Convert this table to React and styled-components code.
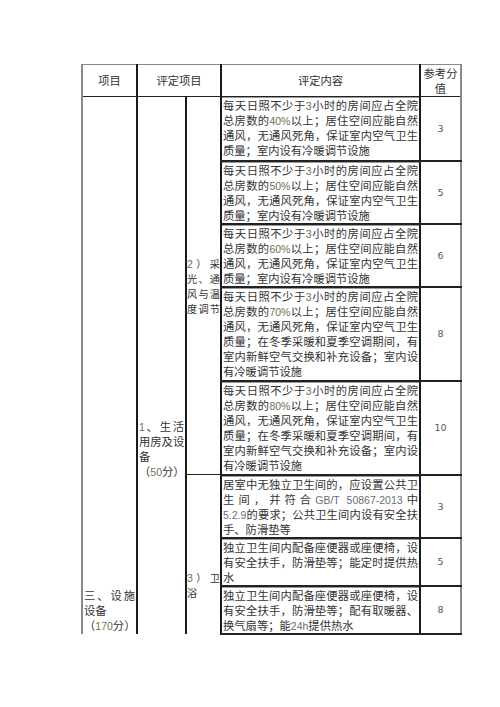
import React from 'react'
import styled, { createGlobalStyle } from 'styled-components'

const GlobalStyle = createGlobalStyle`
  html, body {
    margin: 0;
    padding: 0;
    background: #ffffff;
  }
  body {
    font-family: "Noto Sans CJK SC", "Noto Sans", sans-serif;
    color: #333333;
  }
`

const Page = styled.div`
  width: 500px;
  height: 707px;
  padding: 64px 0 0 81px;
  box-sizing: border-box;
  background: #ffffff;
`

const Table = styled.table`
  width: 379px;
  table-layout: fixed;
  border-collapse: collapse;
  border-top: 1px solid #8a8a8a;
  border-left: 2px solid #8a8a8a;
  border-right: 2px solid #8a8a8a;
  font-size: 11.3px;
  line-height: 15px;
  color: #333333;
`

const Row = styled.tr`
  height: ${p => p.$h}px;
`

const HeadCell = styled.th`
  font-weight: normal;
  text-align: center;
  vertical-align: middle;
  padding: 0;
  border-bottom: 1.5px solid #222;
  border-left: 2px solid #1a1a1a;
  &:first-child {
    border-left: none;
  }
`

const SideCell = styled.td`
  vertical-align: ${p => p.$align || 'top'};
  padding: ${p => p.$pad || '0'};
  border-left: ${p => (p.$first ? 'none' : '2px solid #1a1a1a')};
  border-bottom: ${p => (p.$line ? '1.5px solid #222' : 'none')};
  font-size: ${p => p.$size || 11.3}px;
`

const ContentCell = styled.td`
  vertical-align: top;
  padding: 1px 1px 0 1px;
  border-left: 2px solid #1a1a1a;
  border-bottom: 2px solid #222;
  box-shadow: inset 0 1px 0 #9a9a9a;
`

const ScoreCell = styled.td`
  vertical-align: middle;
  text-align: center;
  padding: 0;
  border-left: 2px solid #1a1a1a;
  border-bottom: 2px solid #222;
  font-family: "DejaVu Sans", Verdana, sans-serif;
  font-size: 9.5px;
  color: #555555;
`

const Line = styled.div`
  height: 15px;
  white-space: nowrap;
  text-align: ${p => p.$mode};
  text-align-last: ${p => p.$mode};
`

const Num = styled.span`
  font-family: "Liberation Sans", Arial, sans-serif;
  font-size: 10.5px;
  line-height: 10px;
  color: ${p => p.$tint || '#6f6f52'};
`

const splitNums = text =>
  text.split(/([0-9A-Za-z.%/-]+(?: [0-9A-Za-z.%/-]+)*)/).map((part, i) =>
    i % 2 === 1 ? (
      <Num key={i} $tint={/[A-Za-z]|\./.test(part) ? '#66707a' : undefined}>
        {part}
      </Num>
    ) : (
      part
    )
  )

// a line is either a string (justified, last one falls back to lastMode) or [text, mode]
const Lines = ({ lines, lastMode = 'left' }) =>
  lines.map((l, i) => {
    const [text, mode] = Array.isArray(l) ? l : [l, i === lines.length - 1 ? lastMode : 'justify']
    return (
      <Line key={i} $mode={mode}>
        {splitNums(text)}
      </Line>
    )
  })

const sunLines = pct => [
  '每天日照不少于3小时的房间应占全院',
  `总房数的${pct}以上；居住空间应能自然`,
  '通风，无通风死角，保证室内空气卫生'
]

const rows = [
  { h: 64, score: '3', lines: [...sunLines('40%'), '质量；室内设有冷暖调节设施'] },
  { h: 62, score: '5', lines: [...sunLines('50%'), '质量；室内设有冷暖调节设施'] },
  { h: 63, score: '6', lines: [...sunLines('60%'), '质量；室内设有冷暖调节设施'] },
  {
    h: 94,
    score: '8',
    lines: [
      ...sunLines('70%'),
      '质量；在冬季采暖和夏季空调期间，有',
      '室内新鲜空气交换和补充设备；室内设',
      '有冷暖调节设施'
    ]
  },
  {
    h: 94,
    score: '10',
    lines: [
      ...sunLines('80%'),
      '质量；在冬季采暖和夏季空调期间，有',
      '室内新鲜空气交换和补充设备；室内设',
      '有冷暖调节设施'
    ]
  },
  {
    h: 63,
    score: '3',
    lines: [
      '居室中无独立卫生间的，应设置公共卫',
      '生间，并符合GB/T 50867-2013中',
      '5.2.9的要求；公共卫生间内设有安全扶',
      '手、防滑垫等'
    ]
  },
  {
    h: 48,
    score: '5',
    lines: ['独立卫生间内配备座便器或座便椅，设', '有安全扶手，防滑垫等；能定时提供热', '水']
  },
  {
    h: 47,
    score: '8',
    lines: [
      '独立卫生间内配备座便器或座便椅，设',
      '有安全扶手，防滑垫等；配有取暖器、',
      '换气扇等；能24h提供热水'
    ]
  }
]

export default function App() {
  return (
    <Page>
      <GlobalStyle />
      <Table>
        <colgroup>
          <col style={{ width: 55 }} />
          <col style={{ width: 49 }} />
          <col style={{ width: 35 }} />
          <col style={{ width: 199 }} />
          <col style={{ width: 41 }} />
        </colgroup>
        <thead>
          <Row $h={32}>
            <HeadCell>项目</HeadCell>
            <HeadCell colSpan={2}>评定项目</HeadCell>
            <HeadCell>评定内容</HeadCell>
            <HeadCell>
              参考分
              <br />值
            </HeadCell>
          </Row>
        </thead>
        <tbody>
          {rows.map((r, i) => (
            <Row key={i} $h={r.h}>
              {i === 0 && (
                <>
                  <SideCell rowSpan={8} $first $align="bottom" $pad="0 1px 1px 1px">
                    <Lines lines={['三、设施', ['设备', 'left'], ['（170分）', 'center']]} />
                  </SideCell>
                  <SideCell rowSpan={8} $pad="322px 1px 0 1px">
                    <Lines lines={['1、生活', '用房及设', ['备', 'left'], ['（50分）', 'center']]} />
                  </SideCell>
                  <SideCell rowSpan={5} $align="middle" $line $size={10.2}>
                    <Lines lines={['2）采', '光、通', '风与温', '度调节']} lastMode="justify" />
                  </SideCell>
                </>
              )}
              {i === 5 && (
                <SideCell rowSpan={3} $pad="95px 0 0 0" $size={10.2}>
                  <Lines lines={['3）卫', '浴']} />
                </SideCell>
              )}
              <ContentCell>
                <Lines lines={r.lines} />
              </ContentCell>
              <ScoreCell>{r.score}</ScoreCell>
            </Row>
          ))}
        </tbody>
      </Table>
    </Page>
  )
}
